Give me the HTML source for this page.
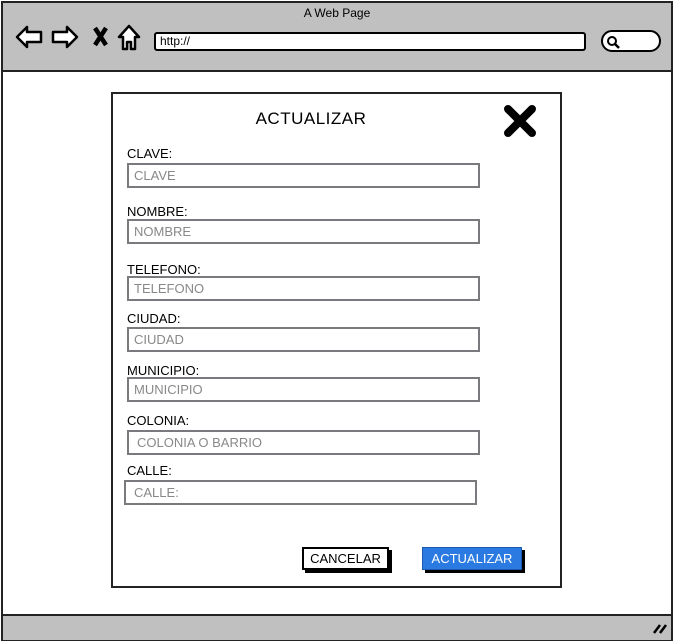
<!DOCTYPE html>
<html><head><meta charset="utf-8"><style>
*{margin:0;padding:0;box-sizing:border-box}
body{width:674px;height:643px;background:#fff;font-family:"Liberation Sans",sans-serif;position:relative;overflow:hidden}
.a{position:absolute}
.lbl{position:absolute;left:127px;font-size:13px;color:#000}
.in{position:absolute;left:127px;width:353px;height:25px;border:2px solid #7a7a7e;background:#fff;font-size:13px;color:#888;padding-left:5px;line-height:21px}
</style></head><body>
<div class="a" style="left:1px;top:1px;width:672px;height:640px;border:2px solid #222;background:#fff"></div>
<div class="a" style="left:3px;top:3px;width:668px;height:69px;background:#c0c0c0;border-bottom:2px solid #222"></div>
<div class="a" style="left:3px;top:614px;width:668px;height:26px;background:#c0c0c0;border-top:2px solid #222"></div>
<div class="a" style="left:0;top:6px;width:674px;text-align:center;font-size:12px">A Web Page</div>
<svg class="a" style="left:14px;top:22px" width="130" height="30" viewBox="0 0 130 30">
<path d="M3 15 L13 5 L13 10 L27 10 L27 20 L13 20 L13 25 Z" fill="#fff" stroke="#000" stroke-width="2.5" stroke-linejoin="round"/>
<path d="M63 15 L53 5 L53 10 L39 10 L39 20 L53 20 L53 25 Z" fill="#fff" stroke="#000" stroke-width="2.5" stroke-linejoin="round"/>
<path d="M81 6 L92 23 M92 6 L81 23" stroke="#000" stroke-width="4.5"/>
<path d="M115 4 L105 15 L109 15 L109 27 L113 27 L113 20 L117 20 L117 27 L121 27 L121 15 L125 15 Z" fill="#fff" stroke="#000" stroke-width="2.5" stroke-linejoin="round"/>
</svg>
<div class="a" style="left:154px;top:32px;width:432px;height:19px;border:2px solid #000;border-radius:3px;background:#fff;font-size:12px;padding-left:4px;line-height:15px">http://</div>
<div class="a" style="left:601px;top:30px;width:60px;height:22px;border:2px solid #000;border-radius:11px;background:#fff"></div>
<div class="a" style="left:607px;top:36px;width:10px;height:10px;border:2.5px solid #000;border-radius:50%"></div>
<svg class="a" style="left:614px;top:43px" width="6" height="6"><path d="M0 0 L5 5" stroke="#000" stroke-width="2.5"/></svg>
<svg class="a" style="left:652px;top:621px" width="16" height="14"><path d="M2 12 L8 4 M8 12 L14 4" stroke="#000" stroke-width="2.5"/></svg>

<div class="a" style="left:111px;top:92px;width:451px;height:496px;border:2px solid #222;background:#fff"></div>
<div class="a" style="left:111px;top:109px;width:400px;text-align:center;font-size:17px;letter-spacing:0.5px">ACTUALIZAR</div>
<svg class="a" style="left:503px;top:104px" width="34" height="34"><path d="M5 5 L29 29 M29 5 L5 29" stroke="#000" stroke-width="8" stroke-linecap="round"/></svg>

<div class="lbl" style="top:146px">CLAVE:</div><div class="in" style="top:163px">CLAVE</div>
<div class="lbl" style="top:204px">NOMBRE:</div><div class="in" style="top:219px">NOMBRE</div>
<div class="lbl" style="top:262px">TELEFONO:</div><div class="in" style="top:276px">TELEFONO</div>
<div class="lbl" style="top:311px">CIUDAD:</div><div class="in" style="top:327px">CIUDAD</div>
<div class="lbl" style="top:363px">MUNICIPIO:</div><div class="in" style="top:377px">MUNICIPIO</div>
<div class="lbl" style="top:413px">COLONIA:</div><div class="in" style="top:430px;padding-left:8px">COLONIA O BARRIO</div>
<div class="lbl" style="top:463px">CALLE:</div><div class="in" style="top:480px;left:124px;padding-left:8px">CALLE:</div>

<div class="a" style="left:305px;top:550px;width:87px;height:23px;background:#000"></div>
<div class="a" style="left:302px;top:547px;width:87px;height:23px;border:2px solid #000;background:#fff;font-size:13px;text-align:center;line-height:19px">CANCELAR</div>
<div class="a" style="left:425px;top:550px;width:100px;height:23px;background:#000"></div>
<div class="a" style="left:422px;top:547px;width:100px;height:23px;background:#2a7ae2;border:1px solid #1a5ab0;color:#fff;font-size:13px;text-align:center;line-height:21px">ACTUALIZAR</div>
</body></html>
